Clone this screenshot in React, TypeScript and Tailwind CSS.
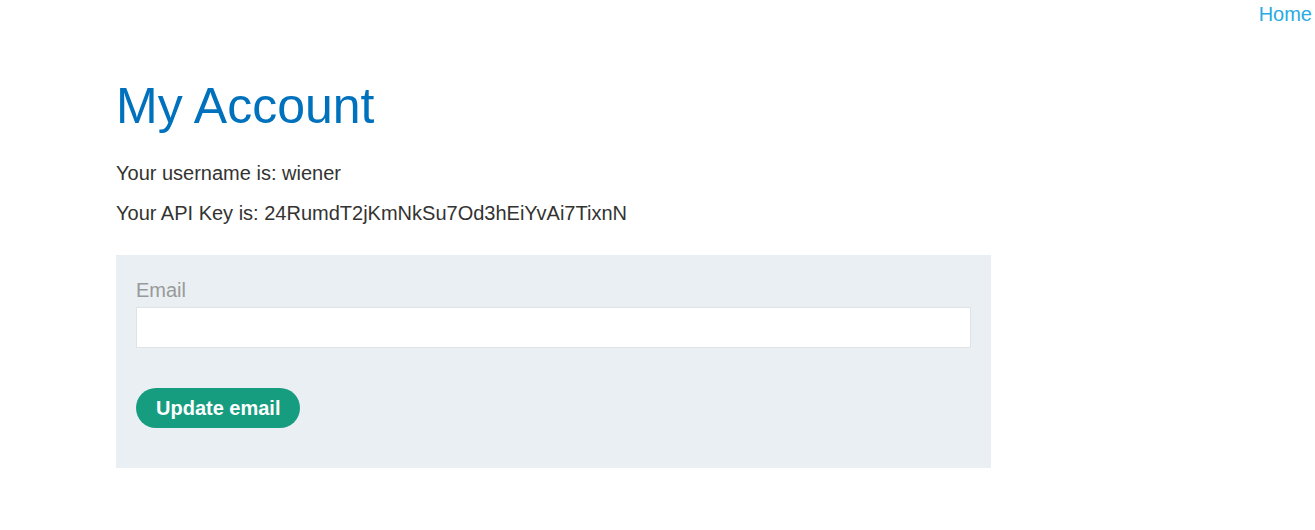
export default function App() {
    return (
        <div className="min-h-[530px] bg-white font-['Liberation_Sans',Arial,sans-serif] text-[#333332]">
            <div className="flex justify-end pr-[3px] pt-[2px]">
                <a href="#" className="text-[20px] leading-[24px] text-[#29abe2]">
                    Home
                </a>
            </div>
            <div className="pl-[116px] pt-[50px]">
                <h1 className="text-[50px] leading-[60px] text-[#0071bc]">My Account</h1>
                <p className="mt-[25px] text-[20px] leading-[24px]">Your username is: wiener</p>
                <p className="mt-[16px] text-[20px] leading-[24px]">
                    Your API Key is: 24RumdT2jKmNkSu7Od3hEiYvAi7TixnN
                </p>
                <div className="mt-[30px] w-[875px] bg-[#e9eff2] px-[20px] pt-[23px] pb-[40px]">
                    <label className="block text-[20px] leading-[24px] text-[#999999]">Email</label>
                    <input
                        type="email"
                        className="mt-[5px] block h-[41px] w-full border border-[#e0e3e4] bg-white px-2 text-[16px] outline-none"
                    />
                    <button className="mt-[40px] h-[40px] rounded-[20px] bg-[#169d80] px-[20px] text-[20px] font-bold text-white">
                        Update email
                    </button>
                </div>
            </div>
        </div>
    );
}
